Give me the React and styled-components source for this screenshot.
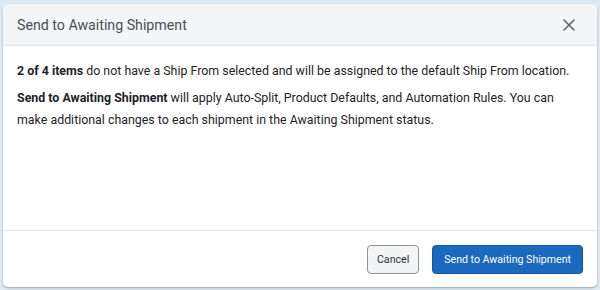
import React from 'react';
import styled, { createGlobalStyle } from 'styled-components';

const GlobalStyle = createGlobalStyle`
  html, body {
    margin: 0;
    padding: 0;
    background: #dde9f2;
    font-family: Roboto, "Liberation Sans", sans-serif;
  }
`;

const Backdrop = styled.div`
  width: 600px;
  height: 290px;
  padding: 4px 3px 3px 3px;
  box-sizing: border-box;
`;

const Modal = styled.div`
  height: 283px;
  display: flex;
  flex-direction: column;
  background: #fff;
  border-radius: 5px;
  overflow: hidden;
  box-shadow: 0 1px 2px rgba(70, 80, 90, 0.45);
`;

const Header = styled.div`
  height: 41px;
  display: flex;
  align-items: center;
  justify-content: space-between;
  padding: 0 22px 0 14px;
  background: #f4f5f7;
  border-bottom: 1px solid #e3e6ea;
`;

const Title = styled.h2`
  margin: 0;
  font-size: 14.2px;
  font-weight: 400;
  color: #4a4f57;
`;

const CloseButton = styled.button`
  border: none;
  background: none;
  padding: 0;
  width: 12px;
  height: 12px;
  display: flex;
  align-items: center;
  justify-content: center;
  cursor: pointer;
  color: #5b6169;
`;

const Body = styled.div`
  flex: 1;
  padding: 14px 14px 0 14px;
  border-bottom: 1px solid #e3e6ea;
`;

const Paragraph = styled.p`
  margin: 0 0 ${p => p.$gap || 0}px 0;
  font-size: 12.4px;
  line-height: 22px;
  color: #1f2328;

  b {
    font-weight: 700;
  }
`;

const Footer = styled.div`
  height: 56px;
  display: flex;
  align-items: center;
  justify-content: flex-end;
  gap: 13px;
  padding: 0 14px;
`;

const Button = styled.button`
  height: 29px;
  padding: 0 ${p => (p.$primary ? 11 : 9)}px;
  border-radius: 4px;
  font-family: Roboto, "Liberation Sans", sans-serif;
  font-size: 10.6px;
  cursor: pointer;
  border: 1px solid ${p => (p.$primary ? '#15589f' : '#8d939b')};
  background: ${p => (p.$primary ? '#1b68bf' : '#f3f4f6')};
  color: ${p => (p.$primary ? '#fff' : '#2b3036')};
`;

export default function App() {
  return (
    <>
      <GlobalStyle />
      <Backdrop>
        <Modal>
          <Header>
            <Title>Send to Awaiting Shipment</Title>
            <CloseButton aria-label="Close">
              <svg width="12" height="12" viewBox="0 0 12 12">
                <path d="M1 1 L11 11 M11 1 L1 11" stroke="currentColor" strokeWidth="1.5" strokeLinecap="round" />
              </svg>
            </CloseButton>
          </Header>
          <Body>
            <Paragraph $gap={5}>
              <b>2 of 4 items</b> do not have a Ship From selected and will be assigned to the default Ship From location.
            </Paragraph>
            <Paragraph>
              <b>Send to Awaiting Shipment</b> will apply Auto-Split, Product Defaults, and Automation Rules. You can make additional changes to each shipment in the Awaiting Shipment status.
            </Paragraph>
          </Body>
          <Footer>
            <Button>Cancel</Button>
            <Button $primary>Send to Awaiting Shipment</Button>
          </Footer>
        </Modal>
      </Backdrop>
    </>
  );
}
